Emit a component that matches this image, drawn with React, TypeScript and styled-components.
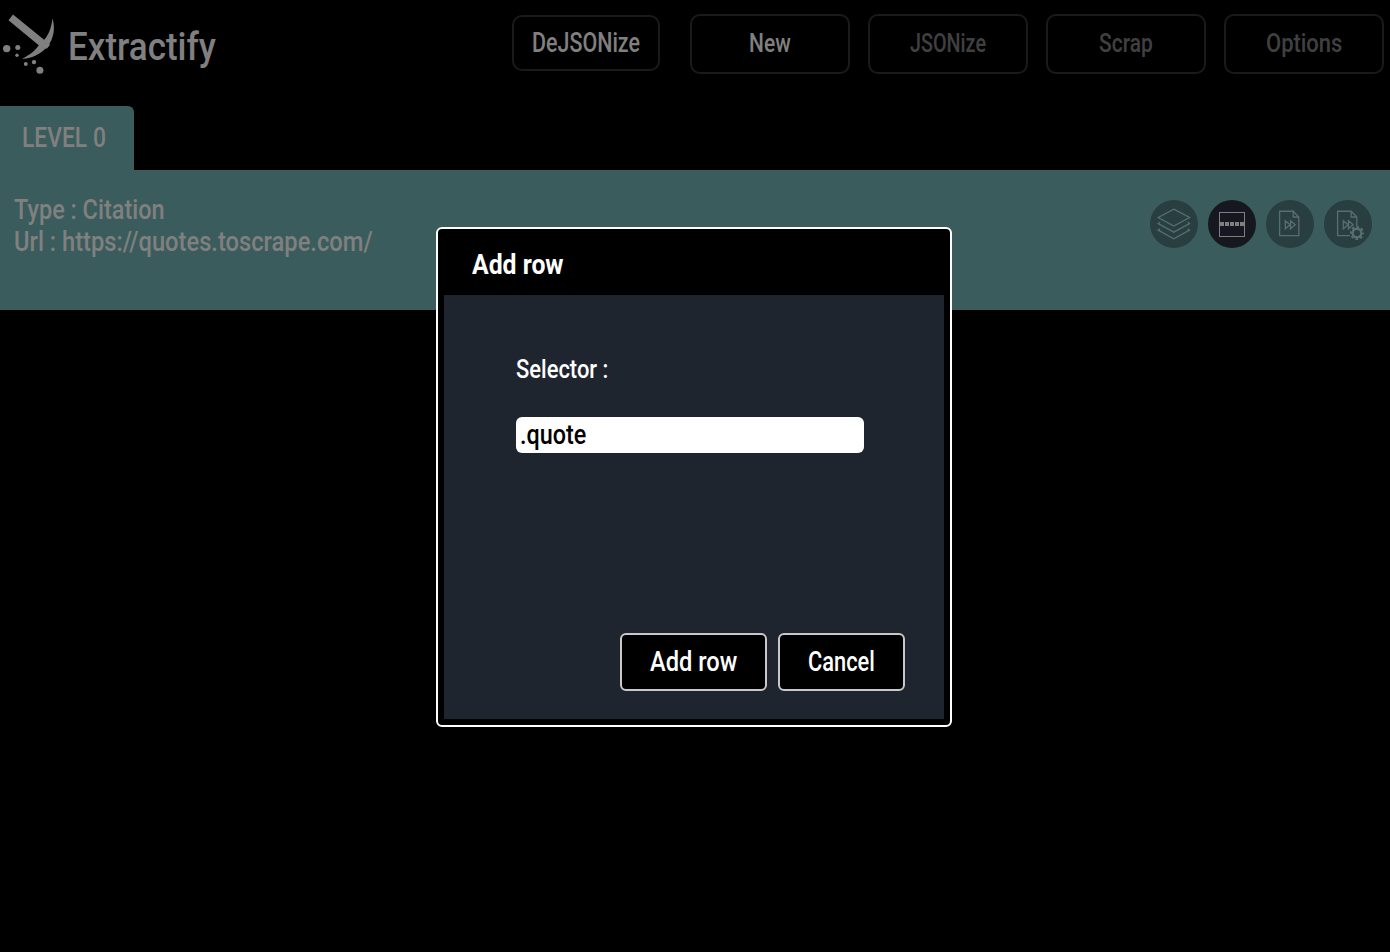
import { useLayoutEffect, useRef, useState } from 'react';
import type { ReactNode } from 'react';
import styled, { createGlobalStyle } from 'styled-components';

const GlobalStyle = createGlobalStyle`
  * { box-sizing: border-box; }
  body { margin: 0; background: #000; font-family: Roboto, "Noto Sans", sans-serif; font-weight: 500; overflow: hidden; }
  button, input { font: inherit; color: inherit; }
`;

const TextBox = styled.span<{ $width: number }>`
  display: block;
  flex: none;
  width: ${(p) => p.$width}px;
  white-space: nowrap;
  text-align: left;
`;
const Glyphs = styled.span`
  display: inline-block;
  transform-origin: 0 50%;
`;

/* Condenses its text horizontally to the given width. */
function Condensed({ width, children }: { width: number; children: ReactNode }) {
  const ref = useRef<HTMLSpanElement>(null);
  const [scale, setScale] = useState(1);
  useLayoutEffect(() => {
    if (ref.current) setScale(width / ref.current.offsetWidth);
  }, [width, children]);
  return (
    <TextBox $width={width}>
      <Glyphs ref={ref} style={{ transform: `scaleX(${scale})` }}>{children}</Glyphs>
    </TextBox>
  );
}

const Page = styled.div`
  height: 952px;
  color: #808080;
  font-size: 28px;
  line-height: 32px;
`;
const Header = styled.header`
  display: flex;
  align-items: flex-start;
  height: 106px;
  padding: 14px 6px 0 0;
`;
const Brand = styled.div`
  display: flex;
  align-items: center;
  gap: 10px;
  height: 60px;
  margin-right: auto;
`;
const LogoMark = styled.svg`
  width: 58px;
  height: 64px;
  fill: #808080;
`;
const BrandName = styled.h1`
  margin: 5px 0 0;
  font-size: 39.5px;
  font-weight: 500;
  line-height: 48px;
`;
const Nav = styled.nav`
  display: flex;
  gap: 18px;
`;
const NavButton = styled.button<{ $muted?: boolean }>`
  display: flex;
  align-items: center;
  justify-content: center;
  width: 160px;
  height: 60px;
  padding: 0 0 2px;
  border: 2px solid #1a1a1a;
  border-radius: 10px;
  background: #000;
  color: ${(p) => (p.$muted ? '#404040' : '#808080')};
  font-size: 26px;
`;
const ImportButton = styled(NavButton)`
  width: 148px;
  height: 56px;
  margin: 1px 12px 0 0;
  padding: 0 0 1px;
  font-size: 28px;
`;
const Tab = styled.div`
  display: flex;
  align-items: center;
  width: 134px;
  height: 64px;
  padding: 0 0 1px 22px;
  border-top-right-radius: 6px;
  background: #3b5c5c;
`;
const LevelPanel = styled.section`
  display: flex;
  justify-content: space-between;
  height: 140px;
  padding: 24px 18px 0 14px;
  background: #3b5c5c;
`;
const Tools = styled.div`
  display: flex;
  gap: 10px;
  padding-top: 6px;
`;
const ToolButton = styled.button<{ $active?: boolean }>`
  width: 48px;
  height: 48px;
  padding: 0;
  border: 0;
  border-radius: 50%;
  background: ${(p) => (p.$active ? '#151821' : '#293e40')};
  color: ${(p) => (p.$active ? '#808080' : '#586d6d')};
  svg { display: block; width: 48px; height: 48px; fill: none; stroke: currentColor; stroke-width: 1.35; }
`;
const Dialog = styled.div`
  position: absolute;
  left: 436px;
  top: 227px;
  display: flex;
  flex-direction: column;
  width: 516px;
  height: 500px;
  padding: 0 6px 6px;
  border: 2px solid #fff;
  border-radius: 6px;
  background: #000;
  color: #fff;
`;
const DialogTitle = styled.h2`
  height: 66px;
  margin: 0;
  padding: 20px 0 0 28px;
  font-size: 28px;
  font-weight: 700;
  line-height: 32px;
`;
const DialogBody = styled.div`
  display: flex;
  flex: 1;
  flex-direction: column;
  padding: 58px 39px 28px 72px;
  background: #1f252f;
`;
const FieldLabel = styled.label`
  margin-bottom: 32px;
  font-size: 26px;
`;
const Field = styled.div`
  width: 348px;
  height: 36px;
  padding: 2px 4px;
  border-radius: 6px;
  background: #fff;
  color: #000;
`;
const Actions = styled.div`
  display: flex;
  justify-content: flex-end;
  gap: 11px;
  margin-top: auto;
`;
const ActionButton = styled.button<{ $width: number }>`
  display: flex;
  align-items: center;
  justify-content: center;
  width: ${(p) => p.$width}px;
  height: 58px;
  padding: 0;
  border: 2px solid #c8c8c8;
  border-radius: 6px;
  background: #000;
`;

const docOutline = 'M27.2 11.2H13.6V35.6H32.8V17L27.2 11.2V17H32.8';
const arrows = 'M19.3 20.8V28.8L24 24.8ZM24.5 20.8V28.8L29.2 24.8Z';

const LayersIcon = () => (
  <svg viewBox="0 0 48 48">
    <path d="M23.8 9.2 39.5 17.5 23.8 26 8.2 17.5Z" />
    <path d="M10 22.2 8.2 23.6 23.8 32.2 39.5 23.6 37.8 22.2" />
    <path d="M10 28.9 8.2 30.2 23.8 38.8 39.5 30.2 37.8 28.9" />
  </svg>
);
const RowIcon = () => (
  <svg viewBox="0 0 48 48">
    <rect x="11.5" y="12.5" width="25" height="24" strokeWidth="1" />
    <path d="M12 24H36" strokeWidth="4" strokeDasharray="4 1" />
  </svg>
);
const PageIcon = () => (
  <svg viewBox="0 0 48 48">
    <path d={docOutline} />
    <path d={arrows} />
  </svg>
);
const PageGearIcon = () => (
  <svg viewBox="0 0 48 48">
    <path d="M26 35.6H13.6V11.2H27.2L32.8 17V26.2M27.2 11.2V17H32.8" />
    <path d={arrows} />
    <circle cx="33" cy="33" r="4.3" strokeWidth="2.4" />
    <circle cx="33" cy="33" r="6" strokeWidth="2.2" strokeDasharray="2.5 2.212" strokeDashoffset="1.25" />
  </svg>
);

const tools = [
  { name: 'Level', Icon: LayersIcon },
  { name: 'Row', Icon: RowIcon, active: true },
  { name: 'Page', Icon: PageIcon },
  { name: 'Page settings', Icon: PageGearIcon },
];

export default function App() {
  return (
    <Page>
      <GlobalStyle />
      <Header>
        <Brand>
          <LogoMark viewBox="0 12 58 64">
            <path d="M13 14.5 8.5 20.3 39 45.5 44.5 48.6 47 48.6 49.9 45 48.8 42 45 40.5Z" />
            <path d="M52.6 18.5C55.5 29 53.5 39 47.5 46.5C41 54 31.5 59 22 58.7C30.5 54.8 35.5 50 39.5 44.5L44 40C49.5 34 51.2 27 52.6 18.5Z" />
            <circle cx="6.7" cy="48.6" r="3.7" />
            <circle cx="17.8" cy="47.4" r="2.5" />
            <circle cx="17" cy="55.3" r="1.7" />
            <circle cx="25.8" cy="64" r="2" />
            <circle cx="34" cy="62.1" r="2.2" />
            <circle cx="39.9" cy="70.3" r="3.5" />
          </LogoMark>
          <BrandName><Condensed width={148}>Extractify</Condensed></BrandName>
        </Brand>
        <Nav>
          <ImportButton><Condensed width={108}>DeJSONize</Condensed></ImportButton>
          <NavButton><Condensed width={42}>New</Condensed></NavButton>
          <NavButton $muted><Condensed width={76}>JSONize</Condensed></NavButton>
          <NavButton $muted><Condensed width={54}>Scrap</Condensed></NavButton>
          <NavButton $muted><Condensed width={76}>Options</Condensed></NavButton>
        </Nav>
      </Header>
      <Tab><Condensed width={84}>LEVEL 0</Condensed></Tab>
      <LevelPanel>
        <div>
          <Condensed width={151}>Type : Citation</Condensed>
          <Condensed width={359}>Url : https://quotes.toscrape.com/</Condensed>
        </div>
        <Tools>
          {tools.map(({ name, Icon, active }) => (
            <ToolButton key={name} aria-label={name} $active={active}><Icon /></ToolButton>
          ))}
        </Tools>
      </LevelPanel>
      <Dialog role="dialog">
        <DialogTitle><Condensed width={92}>Add row</Condensed></DialogTitle>
        <DialogBody>
          <FieldLabel><Condensed width={92}>Selector :</Condensed></FieldLabel>
          <Field><Condensed width={66}>.quote</Condensed></Field>
          <Actions>
            <ActionButton $width={147}><Condensed width={87}>Add row</Condensed></ActionButton>
            <ActionButton $width={127}><Condensed width={67}>Cancel</Condensed></ActionButton>
          </Actions>
        </DialogBody>
      </Dialog>
    </Page>
  );
}
